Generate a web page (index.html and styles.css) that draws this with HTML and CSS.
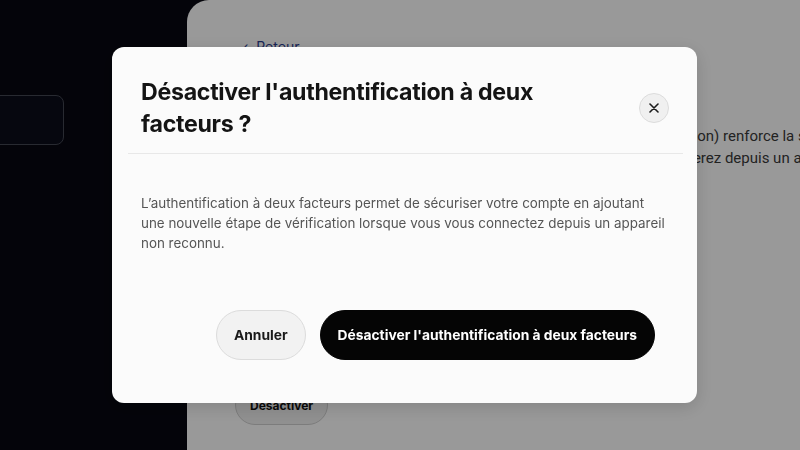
FILE: index.html
```html
<!DOCTYPE html>
<html lang="fr">
<head>
  <meta charset="UTF-8" />
  <meta name="viewport" content="width=device-width, initial-scale=1.0"/>
  <title>Sécurité du compte</title>
  <link rel="stylesheet" href="styles.css">
</head>
<body>

<div class="app">
  <aside class="sidebar">
    <div class="side-item"></div>
  </aside>

  <main class="content">
    <a class="back" href="#">&#8249;&nbsp; Retour</a>
    <h2 class="page-title">Authentification à deux facteurs</h2>
    <p class="page-text">
      L'authentification à deux facteurs (aussi appelée double vérification) renforce la sécurité de votre compte.<br>
      Un code vous sera demandé chaque fois que vous vous connecterez depuis un appareil inconnu.
    </p>
    <button class="ghost-btn">Désactiver</button>
  </main>
</div>

<div class="overlay">
  <div class="modal">
    <div class="modal-head">
      <h1 class="modal-title">Désactiver l'authentification à deux facteurs ?</h1>
      <button class="close-btn" aria-label="Fermer">
        <svg width="10" height="10" viewBox="0 0 10 10">
          <path d="M1 1 L9 9 M9 1 L1 9" stroke="#1c1c1c" stroke-width="1.6" stroke-linecap="round"/>
        </svg>
      </button>
    </div>
    <div class="divider"></div>
    <p class="modal-text">L’authentification à deux facteurs permet de sécuriser votre compte en ajoutant une nouvelle étape de vérification lorsque vous vous connectez depuis un appareil non reconnu.</p>
    <div class="modal-foot">
      <button class="btn btn-light">Annuler</button>
      <button class="btn btn-dark">Désactiver l'authentification à deux facteurs</button>
    </div>
  </div>
</div>

</body>
</html>
```

FILE: styles.css
```css
body {
  margin: 0;
  background: #070811;
  font-family: "Inter", "Roboto", sans-serif;
  overflow: hidden;
}
.app {
  display: flex;
  height: 450px;
}
.sidebar {
  width: 187px;
  padding-top: 95px;
}
.side-item {
  width: 72px;
  height: 48px;
  margin-left: -10px;
  border: 1px solid #434652;
  border-radius: 8px;
  background: #0b0d1a;
}
.content {
  flex: 1;
  background: #ffffff;
  border-radius: 22px 0 0 0;
  padding: 38px 0 0 56px;
  white-space: nowrap;
  overflow: hidden;
}
.back {
  display: block;
  color: #2a3d8f;
  font-size: 14px;
  text-decoration: none;
}
.page-title {
  margin: 28px 0 0;
  font-size: 20px;
  color: #111;
}
.page-text {
  margin: 18px 0 0 23px;
  font-family: "Roboto", sans-serif;
  font-size: 15px;
  line-height: 22px;
  color: #3a3a3a;
}
.ghost-btn {
  margin: 216px 0 0 -8px;
  height: 40px;
  padding: 0 14px;
  border: 1px solid #cfcfcf;
  border-radius: 20px;
  background: #f0f0f0;
  font-family: "Inter", sans-serif;
  font-weight: 700;
  font-size: 12px;
  color: #111;
}

.overlay {
  position: fixed;
  inset: 0;
  background: rgba(0, 0, 0, 0.4);
  display: flex;
  align-items: center;
  justify-content: center;
}
.modal {
  width: 585px;
  margin-left: 9px;
  background: #fbfbfb;
  border-radius: 12px;
  box-shadow: 0 4px 18px rgba(0, 0, 0, 0.15);
}
.modal-head {
  display: flex;
  align-items: center;
  justify-content: space-between;
  padding: 29px 28px 13px 29px;
}
.modal-title {
  margin: 0;
  width: 420px;
  font-size: 23.2px;
  line-height: 32px;
  font-weight: 700;
  letter-spacing: -0.3px;
  color: #141414;
}
.close-btn {
  width: 30px;
  height: 30px;
  border-radius: 50%;
  border: 1px solid #dcdcdc;
  background: #f0f0f0;
  display: flex;
  align-items: center;
  justify-content: center;
  padding: 0;
  cursor: pointer;
}
.divider {
  height: 1px;
  margin: 0 14px 0 16px;
  background: #e8e8e8;
}
.modal-text {
  margin: 0;
  padding: 39px 29px 0 29px;
  font-family: "Inter", sans-serif;
  font-size: 13.4px;
  line-height: 20px;
  color: #555;
}
.modal-foot {
  display: flex;
  justify-content: flex-end;
  gap: 14px;
  padding: 57px 42px 43px;
}
.btn {
  height: 50px;
  border-radius: 25px;
  font-family: "Inter", sans-serif;
  font-weight: 700;
  font-size: 13.8px;
  cursor: pointer;
}
.btn-light {
  padding: 0 17px;
  background: #f2f2f2;
  border: 1px solid #dcdcdc;
  color: #1a1a1a;
}
.btn-dark {
  padding: 0 17px;
  background: #050505;
  border: 1px solid #050505;
  color: #fff;
}
```
